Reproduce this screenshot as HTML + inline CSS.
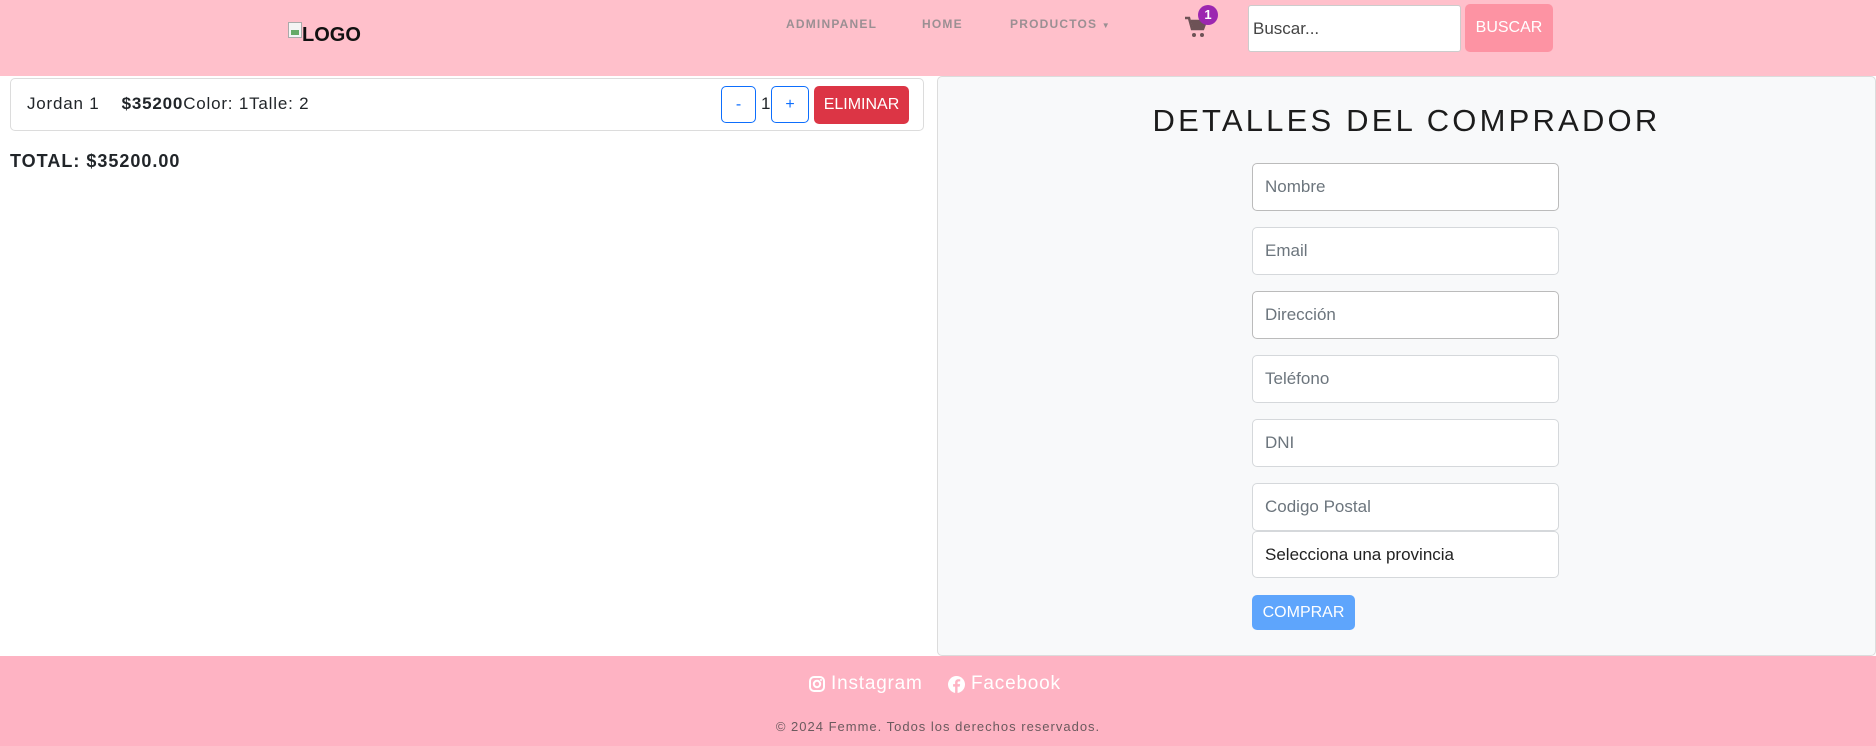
<!DOCTYPE html>
<html><head><meta charset="utf-8"><style>
*{box-sizing:border-box;margin:0;padding:0}
body{width:1876px;height:746px;overflow:hidden;font-family:"Liberation Sans",sans-serif;background:#fff;position:relative;color:#212529}
.abs{position:absolute}
header{position:absolute;left:0;top:0;width:1876px;height:76px;background:#ffc0cb}
.nav{position:absolute;top:17px;font-size:12px;letter-spacing:1.2px;color:#9b8f93;font-weight:bold}
.card{position:absolute;left:10px;top:78px;width:914px;height:53px;border:1px solid #dcdcdc;border-radius:5px;background:#fff}
.ob{position:absolute;top:7px;height:37px;border:1px solid #0d6efd;border-radius:5px;color:#0d6efd;font-size:16px;text-align:center;line-height:35px}
.panel{position:absolute;left:937px;top:76px;width:939px;height:580px;background:#f8f9fa;border:1px solid #dcdcdc;border-radius:5px}
.in{position:absolute;left:1252px;width:307px;height:48px;background:#fff;border:1px solid #d5d8db;border-radius:5px;font-size:17px;color:#6c757d;padding-left:12px;line-height:46px}
footer{position:absolute;left:0;top:656px;width:1876px;height:90px;background:#feb3c3;color:#fff}
</style></head><body>
<header>
  <div class="abs" style="left:288px;top:22px;width:14px;height:16px;border:1px solid #aaa;background:#f4f4f4"><div style="position:absolute;left:2px;bottom:2px;width:8px;height:5px;background:#6a6"></div></div>
  <div class="abs" style="left:302px;top:24px;font-size:20px;font-weight:bold;color:#111">LOGO</div>
  <div class="nav" style="left:786px">ADMINPANEL</div>
  <div class="nav" style="left:922px">HOME</div>
  <div class="nav" style="left:1010px">PRODUCTOS <span style="font-size:8px">▼</span></div>
  <svg class="abs" style="left:1184px;top:16px" width="24" height="22" viewBox="0 0 24 22"><path d="M1 2h4l3 11h11l3-8H7" fill="none" stroke="#6d5256" stroke-width="2.5"/><path d="M7 5h15l-3 8H9z" fill="#6d5256"/><circle cx="10" cy="19" r="2" fill="#6d5256"/><circle cx="18" cy="19" r="2" fill="#6d5256"/></svg>
  <div class="abs" style="left:1198px;top:5px;width:20px;height:20px;border-radius:50%;background:#9c27b0;color:#fff;font-size:13px;font-weight:bold;text-align:center;line-height:20px">1</div>
  <div class="abs" style="left:1248px;top:5px;width:213px;height:47px;background:#fff;border:1px solid #ccc;border-radius:3px;font-size:17px;color:#444;padding-left:4px;line-height:45px">Buscar...</div>
  <div class="abs" style="left:1465px;top:4px;width:88px;height:48px;background:#fd93a3;border-radius:5px;color:#fff;font-size:16px;text-align:center;line-height:48px">BUSCAR</div>
</header>
<div class="card">
  <div class="abs" style="left:16px;top:15px;font-size:17px;letter-spacing:.8px;white-space:nowrap">Jordan 1 &nbsp;&nbsp; <b>$35200</b>Color: 1Talle: 2</div>
  <div class="ob" style="left:710px;width:35px">-</div>
  <div class="abs" style="left:750px;top:15px;font-size:17px">1</div>
  <div class="ob" style="left:760px;width:38px">+</div>
  <div class="abs" style="left:803px;top:7px;width:95px;height:38px;background:#dc3545;border-radius:5px;color:#fff;font-size:16px;text-align:center;line-height:38px">ELIMINAR</div>
</div>
<div class="abs" style="left:10px;top:151px;font-size:18px;font-weight:bold;letter-spacing:1px">TOTAL: $35200.00</div>
<div class="panel"></div>
<div class="abs" style="left:937px;top:103px;width:939px;text-align:center;font-size:31px;letter-spacing:3.2px;color:#1c1c1c">DETALLES DEL COMPRADOR</div>
<div class="in" style="top:163px;border-color:#bbb">Nombre</div>
<div class="in" style="top:227px">Email</div>
<div class="in" style="top:291px;border-color:#bbb">Dirección</div>
<div class="in" style="top:355px">Teléfono</div>
<div class="in" style="top:419px">DNI</div>
<div class="in" style="top:483px">Codigo Postal</div>
<div class="in" style="top:531px;height:47px;color:#222;line-height:45px">Selecciona una provincia</div>
<div class="abs" style="left:1252px;top:595px;width:103px;height:35px;background:#5ea5fc;border-radius:5px;color:#fff;font-size:16px;text-align:center;line-height:35px">COMPRAR</div>
<footer>
  <svg class="abs" style="left:809px;top:20px" width="16" height="16" viewBox="0 0 16 16"><rect x="1" y="1" width="14" height="14" rx="4" fill="none" stroke="#fff" stroke-width="2"/><circle cx="8" cy="8" r="3.2" fill="none" stroke="#fff" stroke-width="2"/><circle cx="12" cy="4" r="1" fill="#fff"/></svg>
  <div class="abs" style="left:831px;top:17px;font-size:19px;letter-spacing:.8px">Instagram</div>
  <svg class="abs" style="left:948px;top:20px" width="17" height="17" viewBox="0 0 16 16"><circle cx="8" cy="8" r="8" fill="#fff"/><path d="M9 16V10h2l.4-2.3H9V6.3c0-.7.3-1.2 1.3-1.2h1.2V3.1c-.3 0-1-.1-1.8-.1-1.8 0-3 1.1-3 3.1v1.6H4.8V10h1.9v6z" fill="#feb3c3"/></svg>
  <div class="abs" style="left:971px;top:17px;font-size:19px;letter-spacing:.8px">Facebook</div>
  <div class="abs" style="left:0;top:63px;width:1876px;text-align:center;font-size:13px;letter-spacing:1px;color:#6b5a5e">© 2024 Femme. Todos los derechos reservados.</div>
</footer>
</body></html>
